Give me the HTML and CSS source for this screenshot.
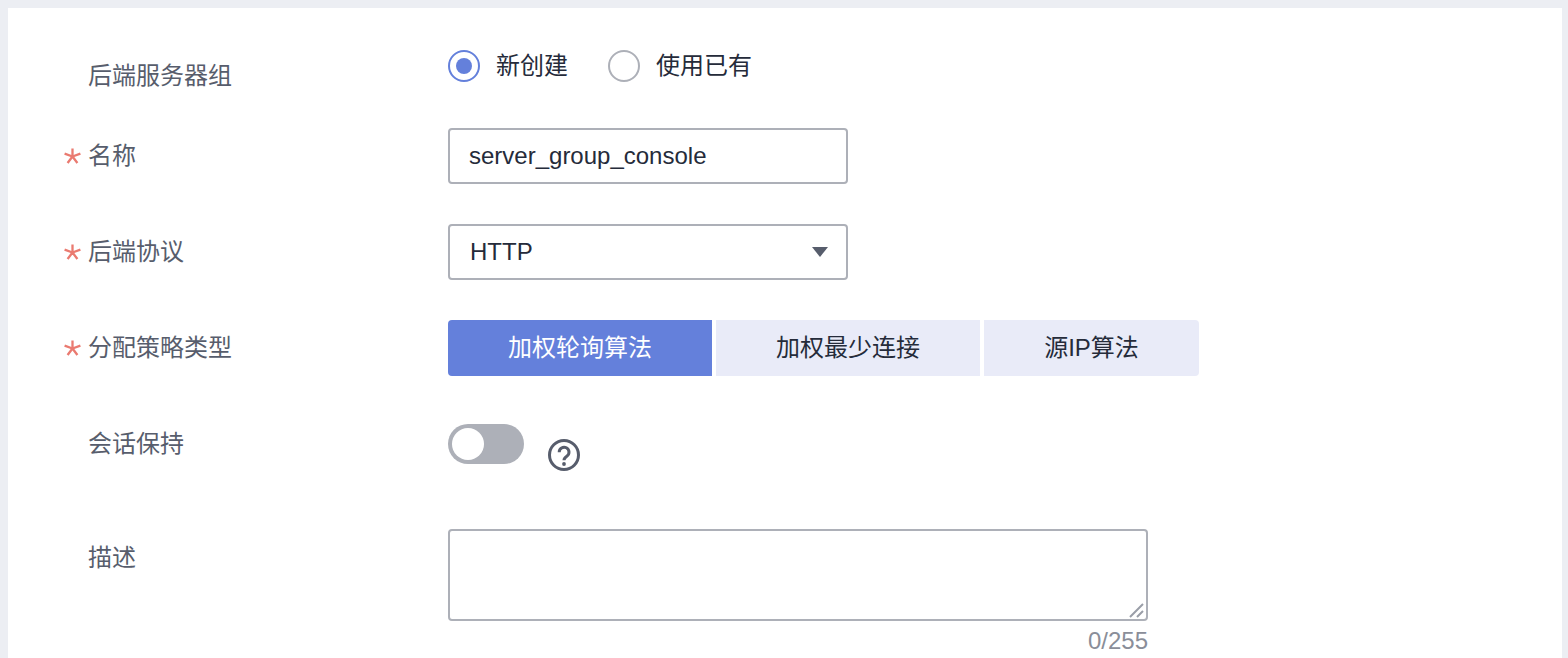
FILE: index.html
```html
<!DOCTYPE html>
<html lang="zh">
<head>
<meta charset="utf-8">
<title>后端服务器组</title>
<link rel="stylesheet" href="styles.css">
</head>
<body>
<main class="card">
  <form class="form">
    <div class="row row-group">
      <span class="mark"></span>
      <label class="label label-group">后端服务器组</label>
      <div class="control radios">
        <span class="radio-item"><span class="radio radio-on"></span><span>新创建</span></span>
        <span class="radio-item"><span class="radio"></span><span>使用已有</span></span>
      </div>
    </div>
    <div class="row row-name">
      <span class="mark"><svg class="star" viewBox="0 0 17 16"><path d="M8.5 0.5V8.5M8.5 8.5L0.6 5.6M8.5 8.5L16.4 5.6M8.5 8.5L3.6 15M8.5 8.5L13.4 15"/></svg></span>
      <label class="label">名称</label>
      <div class="control"><div class="field">server_group_console</div></div>
    </div>
    <div class="row row-proto">
      <span class="mark"><svg class="star" viewBox="0 0 17 16"><path d="M8.5 0.5V8.5M8.5 8.5L0.6 5.6M8.5 8.5L16.4 5.6M8.5 8.5L3.6 15M8.5 8.5L13.4 15"/></svg></span>
      <label class="label">后端协议</label>
      <div class="control"><div class="field field-select"><span>HTTP</span><span class="caret"></span></div></div>
    </div>
    <div class="row row-algo">
      <span class="mark"><svg class="star" viewBox="0 0 17 16"><path d="M8.5 0.5V8.5M8.5 8.5L0.6 5.6M8.5 8.5L16.4 5.6M8.5 8.5L3.6 15M8.5 8.5L13.4 15"/></svg></span>
      <label class="label">分配策略类型</label>
      <div class="control segs">
        <span class="seg seg-on seg-a">加权轮询算法</span>
        <span class="seg seg-a">加权最少连接</span>
        <span class="seg seg-b">源IP算法</span>
      </div>
    </div>
    <div class="row row-session">
      <span class="mark"></span>
      <label class="label label-session">会话保持</label>
      <div class="control session">
        <span class="toggle"><span class="knob"></span></span>
        <svg class="help" viewBox="0 0 32 32"><circle class="help-ring" cx="16" cy="16" r="14.5"/><path class="help-q" d="M11.2 13.2a4.9 4.9 0 1 1 7.6 4c-1.8 1.2-2.8 2-2.8 4"/><circle class="help-dot" cx="16" cy="25" r="1.9"/></svg>
      </div>
    </div>
    <div class="row row-desc">
      <span class="mark"></span>
      <label class="label label-desc">描述</label>
      <div class="control">
        <div class="area">
          <svg class="grip" viewBox="0 0 16 16"><path d="M1 15L14 2M8 15L14 9"/></svg>
        </div>
        <div class="count">0/255</div>
      </div>
    </div>
  </form>
</main>
</body>
</html>
```

FILE: styles.css
```css
* { box-sizing: border-box; }
html, body { height: 100%; }
body {
  margin: 0;
  overflow: hidden;
  background: #eceef3;
  padding: 8px 6px 0 8px;
  font-family: "Liberation Sans", "Noto Sans CJK SC", sans-serif;
  font-size: 24px;
  line-height: 32px;
  color: #252b3a;
}
.card { background: #fff; height: 100%; padding: 42px 0 0 56px; }
.form { display: flex; flex-direction: column; }
.row { display: grid; grid-template-columns: 24px 360px 1fr; }
.row-group { height: 78px; }
.row-name { height: 96px; }
.row-proto { height: 96px; }
.row-algo { height: 104px; }
.row-session { height: 105px; }
.mark { display: flex; align-items: flex-start; }
.star { width: 17px; height: 16px; margin-top: 20px; }
.star path { fill: none; stroke: #ea7a70; stroke-width: 2.3; }
.label { color: #575d6c; padding-top: 12px; }
.label-group { padding-top: 10px; }
.label-session { padding-top: 4px; }
.label-desc { padding-top: 13px; }
.control { min-width: 0; }
.radios { display: flex; gap: 40px; margin-top: 0; }
.radio-item { display: flex; align-items: center; gap: 16px; height: 32px; }
.radio { width: 32px; height: 32px; border-radius: 50%; border: 2px solid #adb0b8; background: #fff; display: flex; align-items: center; justify-content: center; }
.radio-on { border-color: #6480db; }
.radio-on::after { content: ""; width: 16px; height: 16px; border-radius: 50%; background: #6480db; }
.field { width: 400px; height: 56px; border: 2px solid #adb0b8; border-radius: 4px; background: #fff; padding: 0 19px; display: flex; align-items: center; }
.field-select { justify-content: space-between; padding: 0 18px 0 20px; }
.caret { width: 0; height: 0; border-left: 8px solid transparent; border-right: 8px solid transparent; border-top: 10px solid #575d6c; }
.segs { display: flex; gap: 4px; }
.seg { height: 56px; display: flex; align-items: center; justify-content: center; background: #e9ebf8; }
.seg-a { width: 264px; }
.seg-b { width: 215px; border-radius: 0 4px 4px 0; }
.seg-on { background: #6480db; color: #fff; border-radius: 4px 0 0 4px; }
.session { display: flex; align-items: flex-start; gap: 24px; }
.toggle { width: 76px; height: 40px; border-radius: 20px; background: #adb0b8; padding: 4px; display: flex; }
.knob { width: 32px; height: 32px; border-radius: 50%; background: #fff; }
.help { width: 32px; height: 32px; margin-top: 15px; }
.help-ring { fill: none; stroke: #575d6c; stroke-width: 3; }
.help-q { fill: none; stroke: #575d6c; stroke-width: 3; }
.help-dot { fill: #575d6c; }
.area { width: 700px; height: 92px; border: 2px solid #adb0b8; border-radius: 4px; background: #fff; display: flex; justify-content: flex-end; align-items: flex-end; }
.grip { width: 16px; height: 16px; margin: 0 1px 1px 0; }
.grip path { fill: none; stroke: #9a9ea8; stroke-width: 2; }
.count { width: 700px; text-align: right; color: #8a8e99; margin-top: 4px; }
```
